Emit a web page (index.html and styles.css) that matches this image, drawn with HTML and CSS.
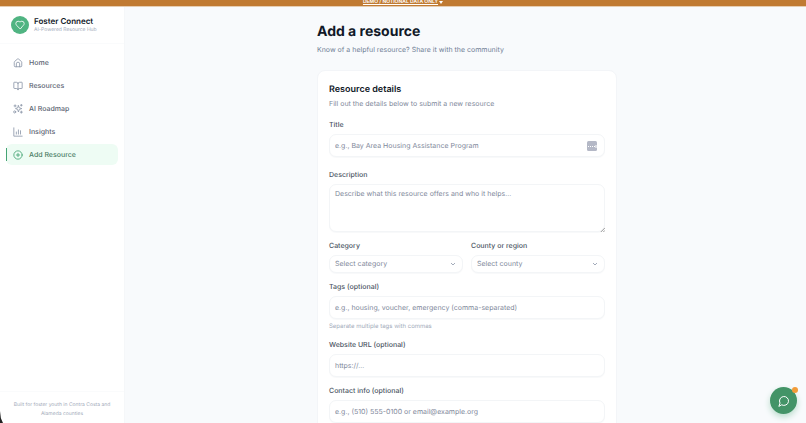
FILE: index.html
```html
<!DOCTYPE html>
<html lang="en">
<head>
<meta charset="utf-8">
<meta name="viewport" content="width=device-width, initial-scale=1">
<title>Foster Connect</title>
<link rel="stylesheet" href="styles.css">
</head>
<body>
<div class="app">
  <button class="banner" type="button"><span class="banner-text">DEMO / NOTIONAL DATA ONLY</span><svg class="banner-caret" viewBox="0 0 8 6"><path d="M0 0h8L4 6z"/></svg></button>
  <div class="shell">
    <aside class="sidebar">
      <div class="brand">
        <span class="logo"><svg class="icon" viewBox="0 0 24 24"><path d="M19 14c1.500-1.500 3-3.200 3-5.500A5.500 5.500 0 0 0 16.500 3c-1.800 0-3 .5-4.500 2-1.500-1.500-2.700-2-4.500-2A5.500 5.500 0 0 0 2 8.500c0 2.300 1.500 4 3 5.500l7 7z"/></svg></span>
        <div>
          <div class="brand-name">Foster Connect</div>
          <div class="brand-sub">AI-Powered Resource Hub</div>
        </div>
      </div>
      <nav class="nav">
        <a class="nav-item" href="#"><svg class="icon" viewBox="0 0 24 24"><path d="M3 10a2 2 0 0 1 .7-1.500l7-6a2 2 0 0 1 2.600 0l7 6A2 2 0 0 1 21 10v9a2 2 0 0 1-2 2H5a2 2 0 0 1-2-2z"/><path d="M8 21v-7a4 4 0 0 1 8 0v7"/></svg>Home</a>
        <a class="nav-item" href="#"><svg class="icon" viewBox="0 0 24 24"><path d="M12 7v14M3 18a1 1 0 0 1-1-1V4a1 1 0 0 1 1-1h5a4 4 0 0 1 4 4 4 4 0 0 1 4-4h5a1 1 0 0 1 1 1v13a1 1 0 0 1-1 1h-6a3 3 0 0 0-3 3 3 3 0 0 0-3-3z"/></svg>Resources</a>
        <a class="nav-item" href="#"><svg class="icon" viewBox="0 0 24 24"><path d="M13 4l2 5 6 2-6 2-2 6-2-6-5-2 5-2z"/><path d="M5 2v5M2.500 4.500h5M20 1v4M18 3h4M20 17v5M17.500 19.500h5"/><circle cx="4" cy="19" r="2.500"/></svg>AI Roadmap</a>
        <a class="nav-item" href="#"><svg class="icon" viewBox="0 0 24 24"><path d="M2 2v20h20M8 17v-5M13 17V7M18 17V9"/></svg>Insights</a>
        <a class="nav-item active" href="#" aria-current="page"><svg class="icon" viewBox="0 0 24 24"><circle cx="12" cy="12" r="10"/><path d="M8 12h8M12 8v8"/></svg>Add Resource</a>
      </nav>
      <footer class="side-foot">Built for foster youth in Contra Costa and Alameda counties</footer>
    </aside>
    <main class="main">
      <div class="content">
        <h1>Add a resource</h1>
        <p class="lead">Know of a helpful resource? Share it with the community</p>
        <form class="card">
          <h2>Resource details</h2>
          <p class="card-sub">Fill out the details below to submit a new resource</p>
          <div class="field field-title">
            <label for="title">Title</label>
            <div class="control">
              <input id="title" type="text" placeholder="e.g., Bay Area Housing Assistance Program">
              <svg class="autofill" viewBox="0 0 10 10"><rect width="10" height="10" rx="1.500"/><path d="M1 5.500h1M3 5.500h1M5 5.500h1M7 5.500h1M9 4v3"/></svg>
            </div>
          </div>
          <div class="field">
            <label for="description">Description</label>
            <div class="control">
              <textarea id="description" placeholder="Describe what this resource offers and who it helps..."></textarea>
              <svg class="grip" viewBox="0 0 6 6"><path d="M1 6l5-5M4 6l2-2"/></svg>
            </div>
          </div>
          <div class="row">
            <div class="field">
              <label for="category">Category</label>
              <div class="control">
                <select id="category"><option>Select category</option></select>
                <svg class="chevron" viewBox="0 0 6 4"><path d="M1 1l2 2 2-2"/></svg>
              </div>
            </div>
            <div class="field">
              <label for="county">County or region</label>
              <div class="control">
                <select id="county"><option>Select county</option></select>
                <svg class="chevron" viewBox="0 0 6 4"><path d="M1 1l2 2 2-2"/></svg>
              </div>
            </div>
          </div>
          <div class="field">
            <label for="tags">Tags (optional)</label>
            <input id="tags" type="text" placeholder="e.g., housing, voucher, emergency (comma-separated)">
            <p class="help">Separate multiple tags with commas</p>
          </div>
          <div class="field">
            <label for="url">Website URL (optional)</label>
            <input id="url" type="url" placeholder="https://...">
          </div>
          <div class="field">
            <label for="contact">Contact info (optional)</label>
            <input id="contact" type="text" placeholder="e.g., (510) 555-0100 or email@example.org">
          </div>
        </form>
      </div>
    </main>
  </div>
  <button class="chat" type="button" aria-label="Open chat"><svg class="icon" viewBox="0 0 24 24"><path d="M7.900 20A9 9 0 1 0 4 16.100L2 22z"/></svg><span class="dot"></span></button>
</div>
</body>
</html>
```
FILE: styles.css
```css
* { box-sizing: border-box; }
body, h1, h2, p { margin: 0; }
body {
  font-family: Inter, "Liberation Sans", sans-serif;
  font-size: 7px;
  line-height: 10px;
  text-rendering: geometricPrecision;
  color: #4b5563;
  background: #f8fafc;
}
button, input, textarea, select { font: inherit; text-rendering: inherit; }
.icon { fill: none; stroke: currentColor; stroke-width: 2; stroke-linecap: round; stroke-linejoin: round; }
.app { display: flex; flex-direction: column; height: 100vh; overflow: hidden; }

.banner {
  display: flex;
  align-items: center;
  justify-content: center;
  gap: 1px;
  flex: none;
  height: 6px;
  padding: 0 0 2px;
  border: 0;
  background: #c07a32;
  box-shadow: 0 1px #e6cdb2;
  color: #fff;
  font-size: 5px;
  line-height: 6px;
  font-weight: 600;
  z-index: 1;
}
.banner-text { text-decoration: underline; }
.banner-caret { width: 4px; height: 3px; fill: #fff; }

.shell { display: flex; flex: 1; min-height: 0; }
.sidebar {
  display: flex;
  flex-direction: column;
  flex: none;
  width: 125px;
  background: #fff;
  border-right: 1px solid #f5f7f9;
}
.sidebar::after {
  content: "";
  position: absolute;
  left: 0;
  bottom: 0;
  width: 3px;
  height: 12px;
  background: #222;
  clip-path: polygon(0 0, 30% 60%, 100% 100%, 0 100%);
}
.brand {
  display: flex;
  align-items: center;
  gap: 5px;
  height: 38px;
  padding: 0 11px;
  border-bottom: 1px solid #fafbfc;
}
.logo {
  display: grid;
  place-items: center;
  width: 18px;
  height: 18px;
  border-radius: 50%;
  background: #50b482;
  color: #fff;
}
.logo .icon { width: 10px; height: 10px; }
.brand-name { font-size: 8px; font-weight: 600; color: #111827; }
.brand-sub { font-size: 5px; line-height: 8px; color: #a3abba; }

.nav { display: flex; flex-direction: column; gap: 2px; padding: 8px 6px; }
.nav-item {
  display: flex;
  align-items: center;
  gap: 6px;
  height: 21px;
  padding: 0 7px;
  border-radius: 6px;
  color: #5b6472;
  font-weight: 500;
  text-decoration: none;
}
.nav-item .icon { width: 10px; height: 10px; color: #8c96a8; }
.active { position: relative; background: #eefcf4; color: #4c7d66; }
.active .icon { color: #44a474; }
.active::before {
  content: "";
  position: absolute;
  left: 0;
  top: 4px;
  bottom: 4px;
  width: 1px;
  background: #44a474;
}
.side-foot {
  margin-top: auto;
  padding: 9px 8px 4px;
  border-top: 1px solid #fafbfc;
  text-align: center;
  font-size: 5px;
  line-height: 9px;
  color: #a3abba;
}

.main { flex: 1; min-width: 0; overflow-y: auto; scrollbar-width: none; padding: 16px 0 0 3px; }
.content { max-width: 300px; margin: 0 auto; }
h1 { font-size: 14px; line-height: 20px; font-weight: 700; color: #111827; }
.lead { margin-top: 2px; font-size: 7px; line-height: 11px; color: #718096; }
.card {
  display: flex;
  flex-direction: column;
  gap: 9px;
  margin: 15px 0 20px;
  padding: 13px 11px;
  border: 1px solid #f3f5f8;
  border-radius: 8px;
  background: #fff;
}
h2 { font-size: 9px; line-height: 12px; font-weight: 600; color: #111827; }
.card-sub { margin: -6px 0 2px; color: #7f899b; }
.field { display: flex; flex-direction: column; min-width: 0; }
.field-title { margin-bottom: 4px; }
label { margin-bottom: 4px; font-weight: 500; color: #4b5563; }
.control { position: relative; display: flex; }
input, textarea, select {
  width: 100%;
  margin: 0;
  padding: 0 5px;
  border: 1px solid #f3f5f7;
  border-radius: 7px;
  background: #fff;
  box-shadow: 0 1px 1px #f8f9fa;
  color: #7f899b;
  outline: 0;
}
input { height: 23px; }
textarea { height: 48px; padding-top: 4px; resize: none; }
select { height: 18px; appearance: none; }
::placeholder { color: #7f899b; opacity: 1; }
.autofill { position: absolute; right: 8px; top: 7px; width: 10px; height: 10px; fill: #b4b8c6; stroke: #fff; }
.autofill rect { stroke: none; }
.grip { position: absolute; right: 0; bottom: 0; width: 5px; height: 5px; fill: none; stroke: #888; stroke-width: 1; }
.chevron { position: absolute; right: 7px; top: 7px; width: 6px; height: 4px; fill: none; stroke: #a3abba; stroke-width: 1; }
.row { display: grid; grid-template-columns: 1fr 1fr; gap: 8px; }
.help { margin-top: 3px; font-size: 6px; line-height: 9px; color: #a3abba; }

.chat {
  position: fixed;
  right: 9px;
  bottom: 9px;
  display: grid;
  place-items: center;
  width: 27px;
  height: 27px;
  padding: 0;
  border: 0;
  border-radius: 50%;
  background: #439467;
  box-shadow: 0 3px 6px #b9dccb;
  color: #fff;
}
.chat .icon { width: 12px; height: 12px; }
.dot { position: absolute; right: -1px; top: 0; width: 6px; height: 6px; border-radius: 50%; background: #f29b38; }
```
